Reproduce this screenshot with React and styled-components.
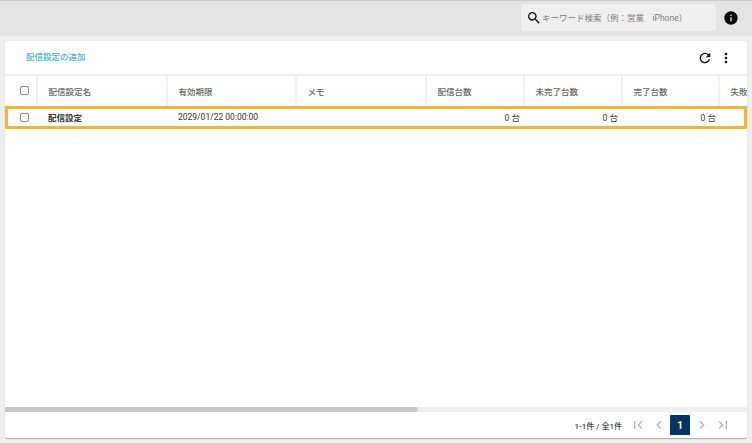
import React from 'react'
import styled, { createGlobalStyle } from 'styled-components'
import { MdSearch, MdInfo, MdRefresh, MdMoreVert, MdFirstPage, MdLastPage, MdChevronLeft, MdChevronRight } from 'react-icons/md'

const Global = createGlobalStyle`
  html, body { margin: 0; padding: 0; height: 100%; }
  body {
    background: #eeeeee;
    font-family: Roboto, "Noto Sans CJK JP", sans-serif;
    overflow: hidden;
  }
`

const Page = styled.div`
  width: 752px;
  height: 443px;
  display: flex;
  flex-direction: column;
  box-sizing: border-box;
`

const TopBar = styled.header`
  height: 36px;
  flex: none;
  display: flex;
  align-items: flex-start;
  justify-content: flex-end;
  padding: 3px 13px 0 0;
  box-sizing: border-box;
  background: #e3e3e3;
  border-top: 1px solid #cdcdcd;
`

const SearchBox = styled.div`
  width: 195px;
  height: 27px;
  background: #efefef;
  border-radius: 3px;
  display: flex;
  align-items: center;
  padding-left: 5px;
  box-sizing: border-box;
  color: #808080;
  font-size: 8.5px;
  svg { color: #111; flex: none; }
`

const SearchText = styled.span`
  margin-bottom: 1px;
`

const InfoButton = styled.div`
  margin-left: 7px;
  height: 27px;
  display: flex;
  align-items: center;
  color: #0c0c0c;
`

const Card = styled.main`
  margin: 5px 5px 0 5px;
  width: 742px;
  height: 397px;
  background: #fff;
  border-radius: 2px;
  box-shadow: 0 1px 1px #a8a8a8;
  display: flex;
  flex-direction: column;
  overflow: hidden;
`

const Toolbar = styled.div`
  height: 33px;
  flex: none;
  display: flex;
  align-items: center;
  justify-content: space-between;
  padding: 0 13px 0 21px;
`

const AddLink = styled.a`
  color: #45b4d6;
  font-size: 8.5px;
  font-weight: 500;
  margin-bottom: 3px;
`

const ToolIcons = styled.div`
  display: flex;
  align-items: center;
  gap: 5px;
  color: #141414;
`

const Table = styled.div`
  flex: 1;
  min-height: 0;
  overflow: hidden;
`

const HeaderRow = styled.div`
  display: grid;
  grid-template-columns: 33px 130px 129px 130px 98px 98px 97px 27px;
  height: 30px;
  border-top: 2px solid #f0f0f0;
  box-sizing: content-box;
`

const HeaderCell = styled.div`
  display: flex;
  align-items: center;
  padding-left: ${(p) => (p.$check ? '15px' : '10.5px')};
  border-right: 2px solid ${(p) => (p.$last ? 'transparent' : '#f0f0f0')};
  color: #666;
  font-size: 8.5px;
  font-weight: 500;
  white-space: nowrap;
  box-sizing: border-box;
`

const DataRow = styled.div`
  display: grid;
  grid-template-columns: 30px 130px 129px 130px 98px 98px 98px;
  height: 23px;
  border: 3px solid #f5b335;
  box-sizing: border-box;
  align-items: center;
`

const DataCell = styled.div`
  display: flex;
  align-items: center;
  justify-content: ${(p) => (p.$right ? 'flex-end' : 'flex-start')};
  padding: ${(p) => (p.$right ? '0 5px 2px 0' : p.$check ? '0 0 0 12px' : p.$date ? '0 0 1px 10px' : '0 0 2px 10px')};
  font-size: 8.5px;
  font-weight: ${(p) => (p.$bold ? 700 : 400)};
  color: #333;
  white-space: nowrap;
  box-sizing: border-box;
`

const Check = styled.span`
  display: block;
  width: 9px;
  height: 9px;
  box-sizing: border-box;
  border: 1px solid #8c8c8c;
  border-radius: 2px;
  background: #fff;
`

const HeaderCheck = styled(Check)`
  margin-bottom: 2px;
`

const ScrollTrack = styled.div`
  height: 5px;
  flex: none;
  background: #f0f0f0;
`

const ScrollThumb = styled.div`
  height: 100%;
  width: 413px;
  background: #c8c8c8;
  border-radius: 0 3px 3px 0;
`

const Footer = styled.footer`
  height: 26px;
  flex: none;
  display: flex;
  align-items: center;
  justify-content: flex-end;
  padding-right: 14px;
  color: #b4b4b4;
`

const PageInfo = styled.span`
  color: #444;
  font-size: 8px;
  font-weight: 500;
  margin-right: 5px;
`

const PageNav = styled.span`
  width: 21px;
  height: 20px;
  display: flex;
  align-items: center;
  justify-content: center;
`

const PageCurrent = styled.span`
  width: 20px;
  height: 20px;
  margin: 0 1px;
  background: #033463;
  color: #fff;
  border-radius: 1px;
  font-size: 10px;
  font-weight: 700;
  display: flex;
  align-items: center;
  justify-content: center;
`

const headers = ['配信設定名', '有効期限', 'メモ', '配信台数', '未完了台数', '完了台数', '失敗']

export default function App() {
  return (
    <Page>
      <Global />
      <TopBar>
        <SearchBox>
          <MdSearch size={16} />
          <SearchText>キーワード検索（例：営業　iPhone）</SearchText>
        </SearchBox>
        <InfoButton>
          <MdInfo size={16} />
        </InfoButton>
      </TopBar>
      <Card>
        <Toolbar>
          <AddLink>配信設定の追加</AddLink>
          <ToolIcons>
            <MdRefresh size={16} />
            <MdMoreVert size={16} />
          </ToolIcons>
        </Toolbar>
        <Table>
          <HeaderRow>
            <HeaderCell $check>
              <HeaderCheck />
            </HeaderCell>
            {headers.map((h, i) => (
              <HeaderCell key={h} $last={i === headers.length - 1}>{h}</HeaderCell>
            ))}
          </HeaderRow>
          <DataRow>
            <DataCell $check>
              <Check />
            </DataCell>
            <DataCell $bold>配信設定</DataCell>
            <DataCell $date>2029/01/22 00:00:00</DataCell>
            <DataCell />
            <DataCell $right>0 台</DataCell>
            <DataCell $right>0 台</DataCell>
            <DataCell $right>0 台</DataCell>
          </DataRow>
        </Table>
        <ScrollTrack>
          <ScrollThumb />
        </ScrollTrack>
        <Footer>
          <PageInfo>1-1件 / 全1件</PageInfo>
          <PageNav><MdFirstPage size={16} /></PageNav>
          <PageNav><MdChevronLeft size={16} /></PageNav>
          <PageCurrent>1</PageCurrent>
          <PageNav><MdChevronRight size={16} /></PageNav>
          <PageNav><MdLastPage size={16} /></PageNav>
        </Footer>
      </Card>
    </Page>
  )
}
